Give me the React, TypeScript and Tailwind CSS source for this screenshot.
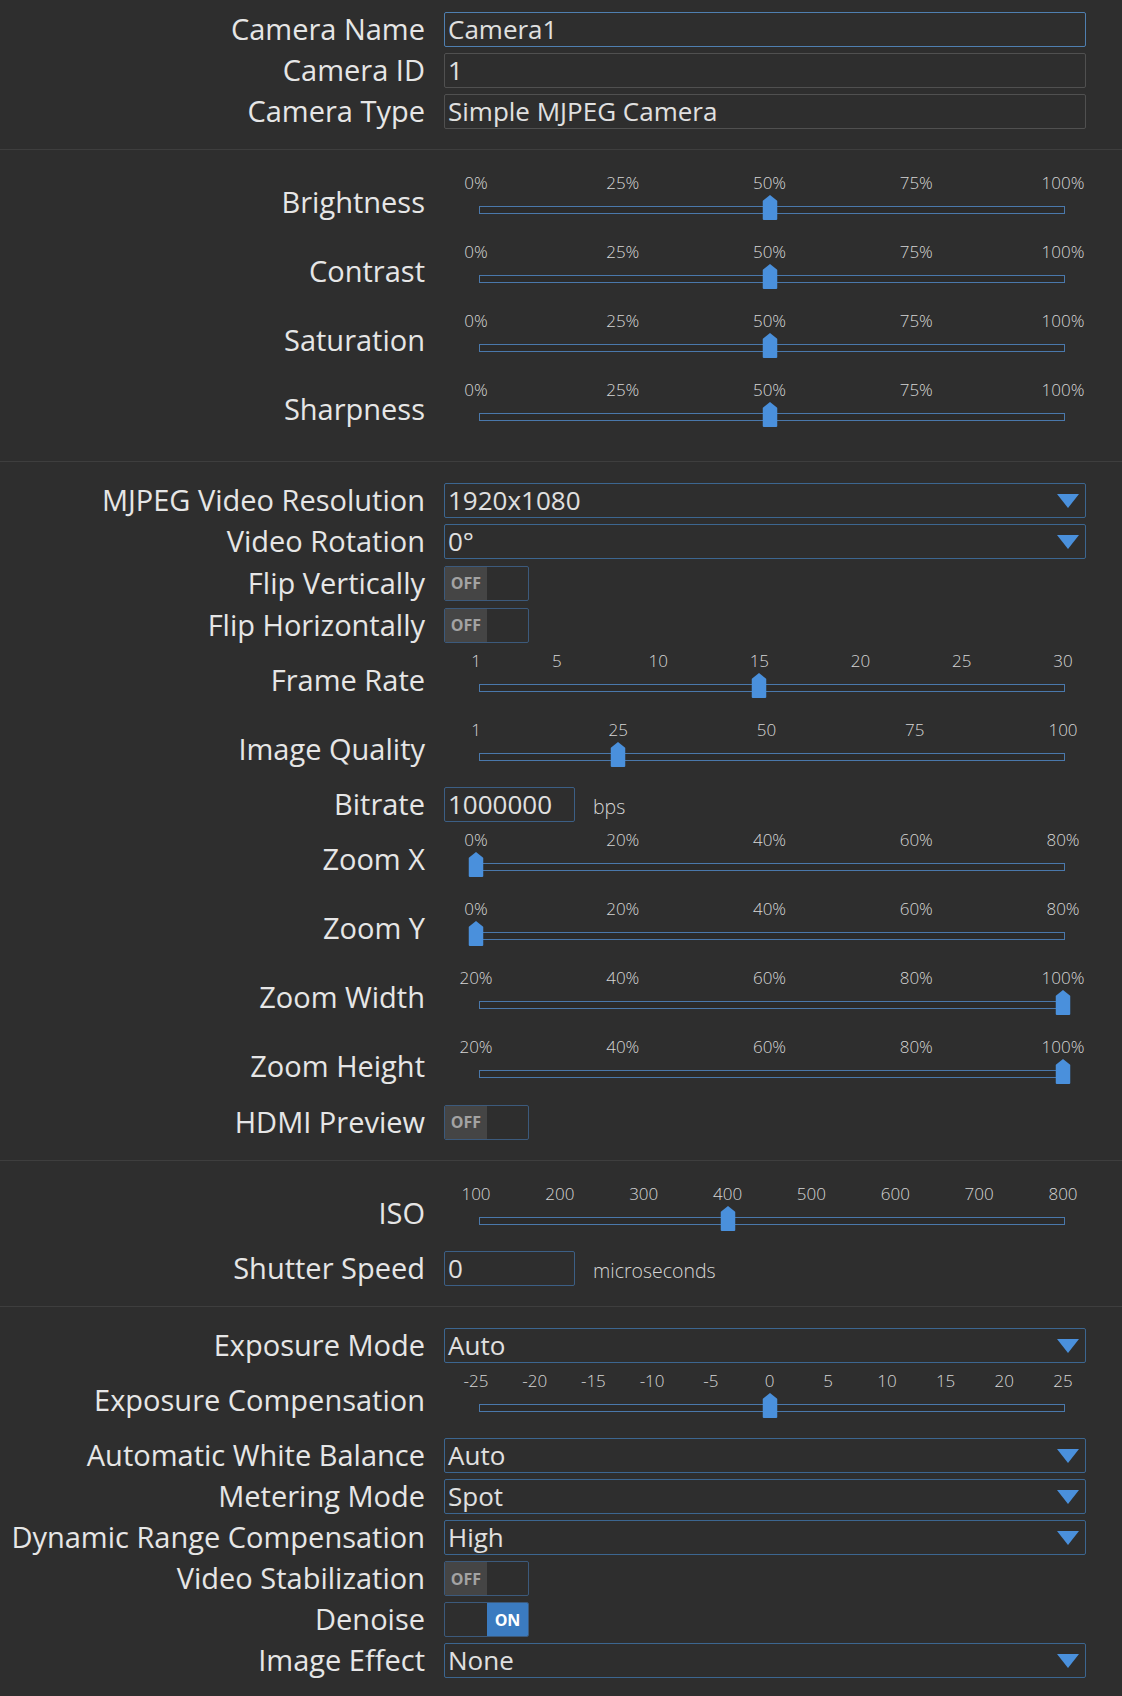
import React from 'react';

type Tick = { text: string; pos: number };

const even = (labels: string[]): Tick[] =>
  labels.map((text, i) => ({ text, pos: i / (labels.length - 1) }));

const scaled = (values: number[], min: number, max: number): Tick[] =>
  values.map((v) => ({ text: String(v), pos: (v - min) / (max - min) }));

const pct5 = even(['0%', '25%', '50%', '75%', '100%']);

const Label: React.FC<{ text: string }> = ({ text }) => (
  <div className="w-[425px] shrink-0 pb-[2px] text-right text-[29px] leading-none text-[#e6e6e6] whitespace-nowrap">
    {text}
  </div>
);

// size: 'row' = 41px input row, 'wide' = 42px (toggles in the video block), 'tall' = slider
const Row: React.FC<{ label: string; size?: 'row' | 'wide' | 'tall'; children: React.ReactNode }> = ({
  label,
  size = 'row',
  children,
}) => (
  <div className={`flex items-center ${size === 'tall' ? 'h-[69px]' : size === 'wide' ? 'h-[42px]' : 'h-[41px]'}`}>
    <Label text={label} />
    <div className="ml-[19px] w-[642px] h-full flex items-center">{children}</div>
  </div>
);

const TextBox: React.FC<{ value: string; tone?: 'focus' | 'blue' | 'gray'; narrow?: boolean }> = ({
  value,
  tone = 'gray',
  narrow,
}) => (
  <div
    className={`h-[35px] flex items-center pl-[3px] pb-[2px] rounded-[2px] border text-[26px] leading-none text-[#e0e0e0] ${
      narrow ? 'w-[131px]' : 'w-full'
    } ${tone === 'focus' ? 'border-[#4f7fb0]' : tone === 'blue' ? 'border-[#3c5f85]' : 'border-[#505050]'}`}
  >
    {value}
  </div>
);

const Select: React.FC<{ value: string }> = ({ value }) => (
  <div className="w-full h-[35px] flex items-center justify-between pl-[3px] pr-[6px] rounded-[2px] border border-[#3c6690] text-[26px] leading-none text-[#e0e0e0]">
    <span className="pb-[2px]">{value}</span>
    <svg width="22" height="14" viewBox="0 0 22 14">
      <polygon points="0,0 22,0 11,14" fill="#4a90dc" />
    </svg>
  </div>
);

const Toggle: React.FC<{ on?: boolean }> = ({ on }) => (
  <div className="w-[85px] h-[35px] flex rounded-[2px] border border-[#3c5a7c] overflow-hidden text-[16px] font-bold leading-none">
    {on ? (
      <>
        <div className="w-[42px]" />
        <div className="flex-1 bg-[#3b7bc0] text-white flex items-center justify-center">ON</div>
      </>
    ) : (
      <>
        <div className="w-[42px] bg-[#454545] text-[#a3a3a3] flex items-center justify-center">OFF</div>
        <div className="flex-1" />
      </>
    )}
  </div>
);

const Slider: React.FC<{ ticks: Tick[]; value: number }> = ({ ticks, value }) => (
  <div className="h-full w-full">
    <div className="relative ml-[32px] w-[587px] h-full">
      {ticks.map((t) => (
        <span
          key={t.text}
          className="absolute top-[5px] -translate-x-1/2 text-[17px] leading-[20px] font-light text-[#d6d6d6] whitespace-nowrap"
          style={{ left: `${t.pos * 100}%` }}
        >
          {t.text}
        </span>
      ))}
      <div className="absolute top-[38px] left-[3px] right-[-2px] h-[8px] border border-[#4a78ab] bg-[#2b2b2b]" />
      <svg
        className="absolute top-[27px] -translate-x-1/2"
        style={{ left: `${value * 100}%` }}
        width="15"
        height="25"
        viewBox="0 0 15 25"
      >
        <path d="M7.5 0 L15 6 L15 23.5 Q15 25 13.5 25 L1.5 25 Q0 25 0 23.5 L0 6 Z" fill="#4a90dc" />
      </svg>
    </div>
  </div>
);

const Section: React.FC<{ first?: boolean; children: React.ReactNode }> = ({ first, children }) => (
  <div className={first ? 'pt-[9px] pb-[17px]' : 'border-t border-[#3e3e3e] pt-[18px] pb-[17px]'}>
    {children}
  </div>
);

const Unit: React.FC<{ text: string }> = ({ text }) => (
  <span className="ml-[18px] pt-[4px] text-[19.5px] text-[#d6d6d6] font-light">{text}</span>
);

export default function App() {
  return (
    <div className="min-h-[1696px] w-full bg-[#2e2e2e] font-['Open_Sans',sans-serif]">
      <Section first>
        <Row label="Camera Name">
          <TextBox value="Camera1" tone="focus" />
        </Row>
        <Row label="Camera ID">
          <TextBox value="1" />
        </Row>
        <Row label="Camera Type">
          <TextBox value="Simple MJPEG Camera" />
        </Row>
      </Section>

      <Section>
        <Row label="Brightness" size="tall">
          <Slider ticks={pct5} value={0.5} />
        </Row>
        <Row label="Contrast" size="tall">
          <Slider ticks={pct5} value={0.5} />
        </Row>
        <Row label="Saturation" size="tall">
          <Slider ticks={pct5} value={0.5} />
        </Row>
        <Row label="Sharpness" size="tall">
          <Slider ticks={pct5} value={0.5} />
        </Row>
      </Section>

      <Section>
        <Row label="MJPEG Video Resolution">
          <Select value="1920x1080" />
        </Row>
        <Row label="Video Rotation">
          <Select value="0°" />
        </Row>
        <Row label="Flip Vertically" size="wide">
          <Toggle />
        </Row>
        <Row label="Flip Horizontally" size="wide">
          <Toggle />
        </Row>
        <Row label="Frame Rate" size="tall">
          <Slider ticks={scaled([1, 5, 10, 15, 20, 25, 30], 1, 30)} value={14 / 29} />
        </Row>
        <Row label="Image Quality" size="tall">
          <Slider ticks={scaled([1, 25, 50, 75, 100], 1, 100)} value={24 / 99} />
        </Row>
        <Row label="Bitrate">
          <TextBox value="1000000" tone="blue" narrow />
          <Unit text="bps" />
        </Row>
        <Row label="Zoom X" size="tall">
          <Slider ticks={even(['0%', '20%', '40%', '60%', '80%'])} value={0} />
        </Row>
        <Row label="Zoom Y" size="tall">
          <Slider ticks={even(['0%', '20%', '40%', '60%', '80%'])} value={0} />
        </Row>
        <Row label="Zoom Width" size="tall">
          <Slider ticks={even(['20%', '40%', '60%', '80%', '100%'])} value={1} />
        </Row>
        <Row label="Zoom Height" size="tall">
          <Slider ticks={even(['20%', '40%', '60%', '80%', '100%'])} value={1} />
        </Row>
        <Row label="HDMI Preview" size="wide">
          <Toggle />
        </Row>
      </Section>

      <Section>
        <Row label="ISO" size="tall">
          <Slider ticks={even(['100', '200', '300', '400', '500', '600', '700', '800'])} value={3 / 7} />
        </Row>
        <Row label="Shutter Speed">
          <TextBox value="0" tone="blue" narrow />
          <Unit text="microseconds" />
        </Row>
      </Section>

      <Section>
        <Row label="Exposure Mode">
          <Select value="Auto" />
        </Row>
        <Row label="Exposure Compensation" size="tall">
          <Slider ticks={scaled([-25, -20, -15, -10, -5, 0, 5, 10, 15, 20, 25], -25, 25)} value={0.5} />
        </Row>
        <Row label="Automatic White Balance">
          <Select value="Auto" />
        </Row>
        <Row label="Metering Mode">
          <Select value="Spot" />
        </Row>
        <Row label="Dynamic Range Compensation">
          <Select value="High" />
        </Row>
        <Row label="Video Stabilization">
          <Toggle />
        </Row>
        <Row label="Denoise">
          <Toggle on />
        </Row>
        <Row label="Image Effect">
          <Select value="None" />
        </Row>
      </Section>
    </div>
  );
}
